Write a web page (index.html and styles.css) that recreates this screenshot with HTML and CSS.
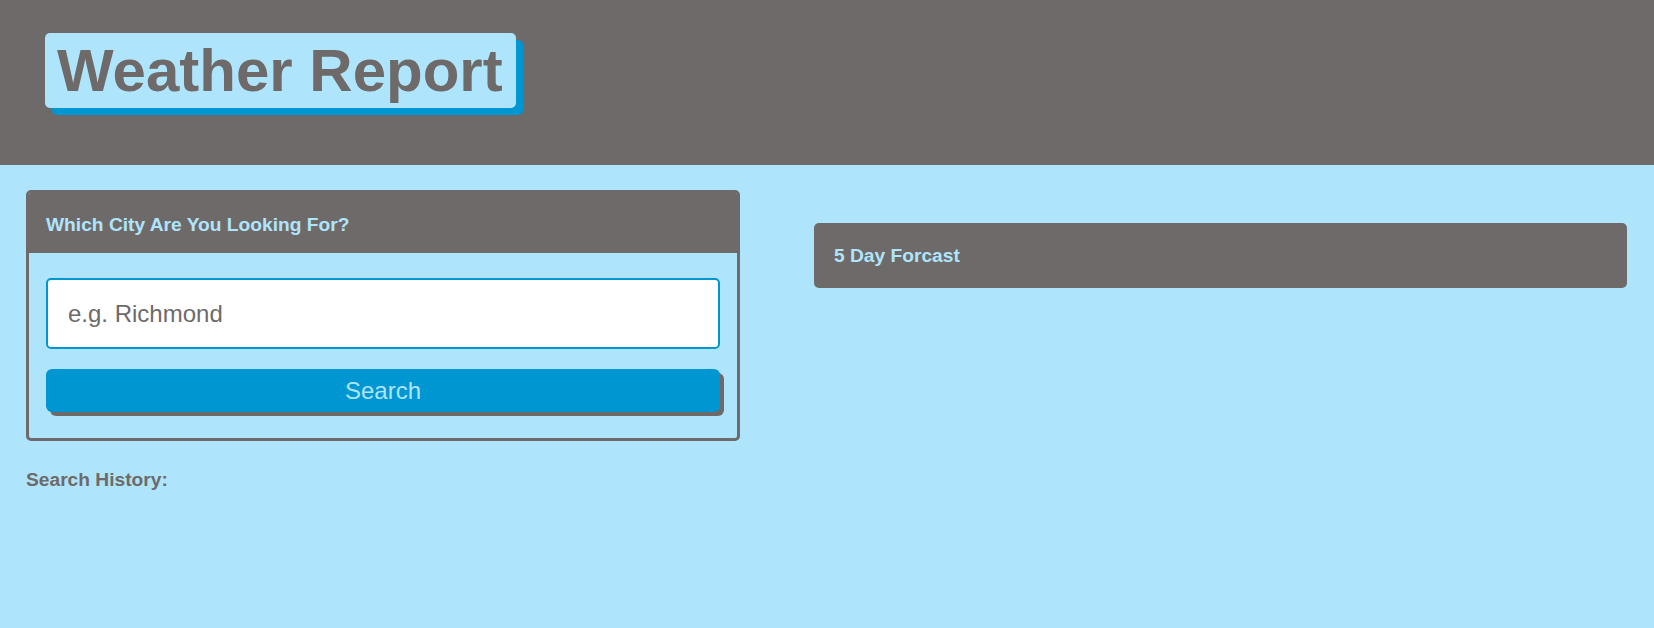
FILE: index.html
```html
<!DOCTYPE html>
<html lang="en">
<head>
<meta charset="utf-8">
<title>Weather Report</title>
<link rel="stylesheet" href="styles.css">
</head>
<body>
<header class="site-header">
  <h1 class="site-title">Weather Report</h1>
</header>
<main class="layout">
  <section class="search-col">
    <div class="card">
      <div class="card-header">Which City Are You Looking For?</div>
      <div class="card-body">
        <input class="city-input" type="text" placeholder="e.g. Richmond">
        <button class="search-btn" type="button">Search</button>
      </div>
    </div>
    <h3 class="history-title">Search History:</h3>
  </section>
  <section class="forecast-col">
    <div class="forecast-panel">5 Day Forcast</div>
  </section>
</main>
</body>
</html>
```

FILE: styles.css
```css
* { box-sizing: border-box; }

html, body {
  margin: 0;
  padding: 0;
}

body {
  background: #afe5fc;
  font-family: "Liberation Sans", Arial, sans-serif;
  color: #6e6a69;
  min-height: 628px;
}

.site-header {
  background: #6e6a69;
  height: 165px;
  padding: 33px 0 0 45px;
}

.site-title {
  display: inline-block;
  margin: 0;
  background: #afe5fc;
  color: #6e6a69;
  font-size: 60px;
  font-weight: bold;
  line-height: 75px;
  height: 75px;
  padding: 0 13px 0 12px;
  border-radius: 5px;
  box-shadow: 7px 7px 0 #0096d2;
}

.layout {
  display: grid;
  grid-template-columns: 714px 1fr;
  column-gap: 74px;
  padding: 25px 27px 0 26px;
  align-items: start;
}

.card {
  border: 3px solid #6e6a69;
  border-radius: 5px;
  overflow: hidden;
}

.card-header {
  background: #6e6a69;
  color: #afe5fc;
  font-weight: bold;
  font-size: 19.2px;
  line-height: 22px;
  height: 60px;
  padding: 21px 17px 0;
}

.card-body {
  display: flex;
  flex-direction: column;
  gap: 20px;
  padding: 25px 17px 26px;
}

.city-input {
  height: 71px;
  width: 100%;
  border: 2px solid #0096d2;
  border-radius: 5px;
  background: #fff;
  padding: 0 20px;
  font-family: "Liberation Sans", Arial, sans-serif;
  font-size: 24px;
  color: #6e6a69;
  outline: none;
}

.city-input::placeholder {
  color: #6e6a69;
  opacity: 1;
}

.search-btn {
  height: 43px;
  width: 100%;
  border: none;
  border-radius: 6px;
  background: #0096d2;
  color: #afe5fc;
  font-family: "Liberation Sans", Arial, sans-serif;
  font-size: 24px;
  box-shadow: 4px 4px 0 #6e6a69;
  padding: 0;
  cursor: pointer;
}

.history-title {
  margin: 28px 0 0;
  font-size: 19.2px;
  line-height: 22px;
  font-weight: bold;
  color: #6e6a69;
}

.forecast-col {
  padding-top: 33px;
}

.forecast-panel {
  background: #6e6a69;
  color: #afe5fc;
  border-radius: 5px;
  height: 65px;
  display: flex;
  align-items: center;
  padding: 1px 20px 0;
  font-size: 19.2px;
  font-weight: bold;
}
```
